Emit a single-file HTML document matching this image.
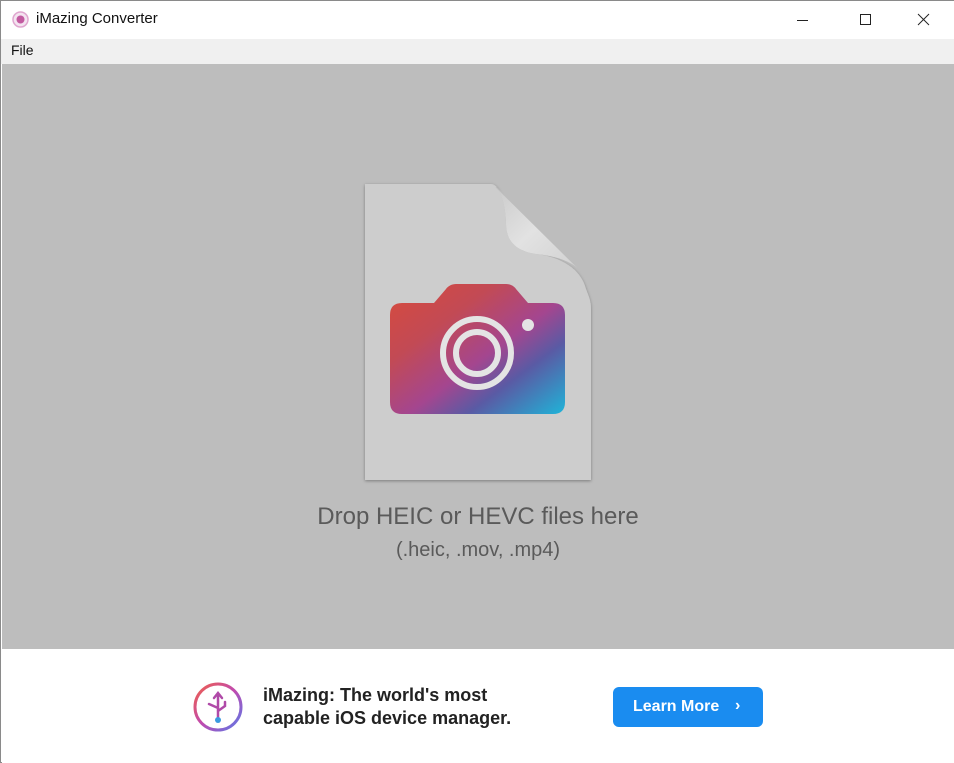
<!DOCTYPE html>
<html><head><style>
*{margin:0;padding:0;box-sizing:border-box}
body{width:954px;height:763px;overflow:hidden;background:#fff;font-family:"Segoe UI","Liberation Sans",sans-serif;position:relative;border:1px solid #8a8a8a}
#title{position:absolute;left:0;top:0;width:954px;height:38px;background:#fff}
#title .t{position:absolute;left:35px;top:9px;font-size:15px;color:#111}
#menu{position:absolute;left:0;top:38px;width:954px;height:25px;background:#f0f0f0}
#menu span{position:absolute;left:10px;top:3px;font-size:14px;color:#111}
#drop{position:absolute;left:1px;top:63px;width:952px;height:585px;background:#bdbdbd}
.h1{position:absolute;left:0;width:954px;text-align:center;color:#5a5a5a}
#ad{position:absolute;left:1px;top:648px;width:952px;height:114px;background:#fff}
.adt{position:absolute;left:262px;top:683px;font-size:18px;font-weight:bold;color:#222;line-height:23px;font-family:"Liberation Sans",sans-serif}
.btn{position:absolute;left:612px;top:686px;width:150px;height:40px;background:#1a8cf0;border-radius:6px;color:#fff;font-size:16px;font-weight:bold;font-family:"Liberation Sans",sans-serif;line-height:40px;padding-left:20px}
</style></head><body>
<div id="title">
<svg style="position:absolute;left:11px;top:10px" width="17" height="17"><circle cx="8.5" cy="8.5" r="7.5" fill="#f4e4f0" stroke="#e0a6cf" stroke-width="1.5"/><circle cx="8.5" cy="8.5" r="4" fill="#c25aa0"/></svg>
<span class="t">iMazing Converter</span>
<svg style="position:absolute;left:790px;top:12px" width="150" height="16" stroke="#222" stroke-width="1" fill="none"><line x1="6" y1="7.5" x2="17" y2="7.5"/><rect x="69.5" y="1.5" width="10" height="10"/><line x1="127" y1="1" x2="138" y2="12"/><line x1="138" y1="1" x2="127" y2="12"/></svg>
</div>
<div id="menu"><span>File</span></div>
<div id="drop"></div>
<svg style="position:absolute;left:355px;top:178px" width="250" height="310">
<defs>
<linearGradient id="cg" x1="0" y1="0" x2="1" y2="1"><stop offset="0" stop-color="#d84b3c"/><stop offset="0.3" stop-color="#c24a55"/><stop offset="0.55" stop-color="#a4468f"/><stop offset="0.72" stop-color="#5a5aa4"/><stop offset="1" stop-color="#1fb4d8"/></linearGradient>
<linearGradient id="fg" x1="0" y1="0" x2="1" y2="1"><stop offset="0" stop-color="#c8c8c8"/><stop offset="0.5" stop-color="#e2e2e2"/><stop offset="1" stop-color="#d0d0d0"/></linearGradient>
<filter id="sh"><feDropShadow dx="0" dy="1" stdDeviation="1.5" flood-opacity="0.35"/></filter>
</defs>
<path d="M9 5 H135 C145 5 150 30 150 45 C150 62 160 72 180 75 C205 78 225 90 230 110 C233 118 235 122 235 130 V301 H9 Z" fill="#cdcdcd" filter="url(#sh)"/>
<path d="M135 5 C145 6 150 30 150 45 C150 62 160 72 180 75 C200 77 215 82 225 92 L140 8 Z" fill="url(#fg)"/>
<path d="M140 8 L225 92" stroke="#bdbdbd" stroke-width="1" fill="none"/>
<path d="M46 124 H78 L90 110 C92 107 96 105 100 105 H150 C154 105 158 107 160 110 L172 124 H197 Q209 124 209 136 V223 Q209 235 197 235 H46 Q34 235 34 223 V136 Q34 124 46 124 Z" fill="url(#cg)"/>
<circle cx="121" cy="174" r="34" fill="none" stroke="#e4e4e4" stroke-width="6"/>
<circle cx="121" cy="174" r="21" fill="none" stroke="#e4e4e4" stroke-width="6"/>
<circle cx="172" cy="146" r="6" fill="#e4e4e4"/>
</svg>
<div class="h1" style="top:502px;font-size:24px">Drop HEIC or HEVC files here</div>
<div class="h1" style="top:538px;font-size:20px">(.heic, .mov, .mp4)</div>
<div id="ad"></div>
<svg style="position:absolute;left:191px;top:680px" width="52" height="52">
<defs><linearGradient id="rg" x1="0" y1="0" x2="1" y2="1"><stop offset="0" stop-color="#f0604a"/><stop offset="0.5" stop-color="#c04ab0"/><stop offset="1" stop-color="#5a7ae8"/></linearGradient></defs>
<circle cx="26" cy="26" r="23" fill="#fff" stroke="url(#rg)" stroke-width="3"/>
<path d="M26 12 V38 M22 17 L26 12 L30 17 M26 30 L33 25 V21 M26 27 L17 23" stroke="#b04aa8" stroke-width="2.5" fill="none" stroke-linecap="round"/>
<circle cx="26" cy="39" r="3" fill="#3a9ae0"/>
</svg>
<div class="adt">iMazing: The world's most<br>capable iOS device manager.</div>
<div class="btn">Learn More<span style="position:absolute;left:122px;top:-1px">›</span></div>
</body></html>
